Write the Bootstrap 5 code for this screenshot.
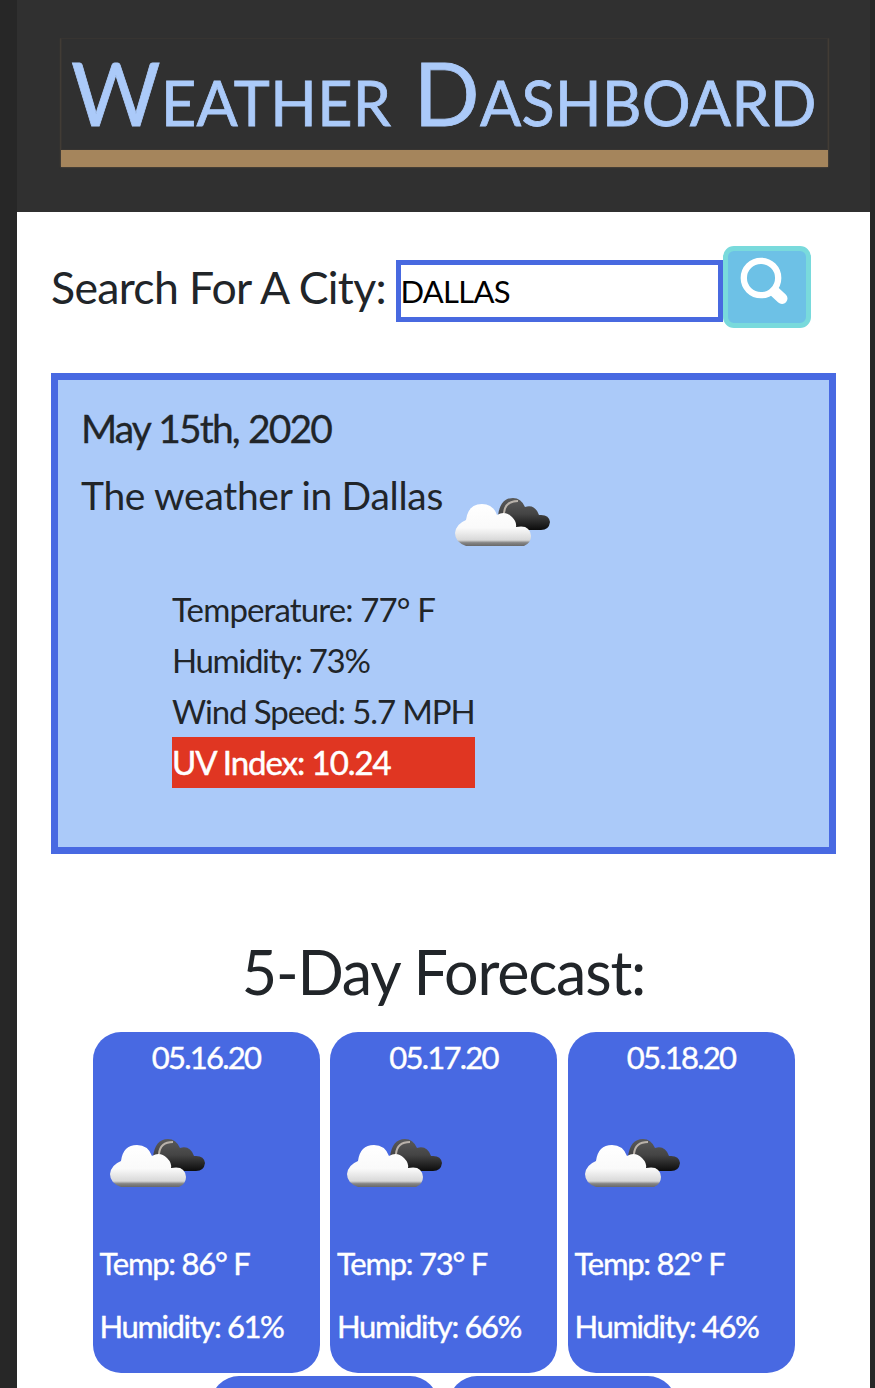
<!DOCTYPE html>
<html lang="en">
<head>
<meta charset="utf-8">
<meta name="viewport" content="width=device-width, initial-scale=1">
<title>Weather Dashboard</title>
<link href="https://cdn.jsdelivr.net/npm/bootstrap@5.3.0/dist/css/bootstrap.min.css" rel="stylesheet">
<style>
html,body{height:1388px;overflow:hidden}
body{background:#272727;font-family:Lato,sans-serif;color:#212529}
.page{width:853px;height:1388px;margin-left:17px}
.top{background:#303030;height:212px;padding:38px 42px 0 44px}
.brand{height:129px;border-bottom:17px solid #a5855c;box-shadow:inset 0 0 0 1px #373431,0 0 2px #6b5842;clip-path:inset(0 -2px -2px -2px);color:#abcaf9;font-size:86.5px;line-height:110px;font-variant:small-caps;padding-left:10px;-webkit-text-stroke:.8px #abcaf9;letter-spacing:.35px}
.search{height:161px;padding:34px 0 0 34px}
.search label{font-size:44.6px;line-height:60px;width:344.5px;margin-top:11px;letter-spacing:-.68px}
.city{width:327.5px;height:62px;margin-top:14px;border:5px solid #4869e0;padding:0;font-size:31px;color:#000;line-height:50px;outline:0;letter-spacing:-.7px}
.go{width:88px;height:82px;border:5px solid #79dadc;border-radius:11px;background:#6dc1e6;margin-left:-.5px}
.today{width:785px;height:481px;margin-left:34px;border:7px solid #4869e2;background:#abcaf9;padding:23px 0 0 23px}
.line1{font-size:39px;line-height:50px;height:67px;letter-spacing:-1.85px;-webkit-text-stroke:.3px;word-spacing:1px}
.line2{height:114px;font-size:39px;line-height:50px;letter-spacing:-.3px}
.stats{width:303px;margin-left:91px;font-size:33px;line-height:51px;letter-spacing:-.87px}
.t-hum{letter-spacing:-1.35px}
.t-wind{letter-spacing:-1.1px}
.uv{background:#e03622;color:#fff;letter-spacing:-1.05px;-webkit-text-stroke:.5px}
.ftitle{font-size:61px;line-height:80px;margin-top:78px;height:100px;letter-spacing:-1.2px}
.days{column-gap:10.5px;row-gap:3px}
.day{width:227px;height:341px;border-radius:28px;background:#4869e2;color:#fff;font-size:31px;padding:0 0 0 7px;line-height:50px;letter-spacing:-1.38px;-webkit-text-stroke:.4px}
.date{text-align:center;padding-right:7px;height:81px;letter-spacing:-1.75px}
.clouds{display:block;width:130px;height:80px;filter:blur(.5px)}
.line2 .clouds{margin:10px 0 0 -3px}
.day .clouds{margin:8px 0 0 -5px}
.temp{margin-top:37px;height:63px;letter-spacing:-1.25px}
</style>
</head>
<body>
<svg width="0" height="0" class="position-absolute">
 <defs>
  <linearGradient id="light" gradientUnits="userSpaceOnUse" x1="0" y1="24" x2="0" y2="67"><stop offset="0" stop-color="#fff"/><stop offset=".55" stop-color="#fafafa"/><stop offset=".84" stop-color="#d8d8d8"/><stop offset=".9" stop-color="#858585"/><stop offset="1" stop-color="#606060"/></linearGradient>
  <linearGradient id="dark" gradientUnits="userSpaceOnUse" x1="0" y1="18" x2="0" y2="50"><stop offset="0" stop-color="#5a5a5a"/><stop offset=".5" stop-color="#444"/><stop offset="1" stop-color="#0c0c0c"/></linearGradient>
  <symbol id="cloud" viewBox="0 0 130 80">
   <path d="M58 36Q60 18 73 18Q81 18 85 27Q95 24 99 35Q109 34 110 42Q109 50 101 50H78L60 41Z" fill="url(#dark)"/>
   <path d="M64 33Q65 21 78 21" fill="none" stroke="#b9b2aa" stroke-width="2"/>
   <path d="M26 66Q15 62 15 53Q16 44 26 40Q28 24 42 24Q53 24 57 35Q65 30 72 37Q77 42 76 47Q90 44 91 56Q91 63 84 66Z" fill="url(#light)"/>
  </symbol>
 </defs>
</svg>
<main class="page bg-white overflow-hidden">
 <header class="top"><h1 class="brand fw-normal m-0 text-nowrap">Weather Dashboard</h1></header>
 <form class="search d-flex align-items-start">
  <label for="city" class="text-nowrap flex-shrink-0">Search For A City:</label>
  <input id="city" class="city rounded-0" value="DALLAS">
  <button type="button" class="go p-0 d-block" aria-label="Search"><svg class="d-block" width="78" height="72" viewBox="0 0 78 72" fill="none" stroke="#fff"><circle cx="33" cy="27" r="17.2" stroke-width="6.3"/><path d="M47 41L54 47.5" stroke-width="11" stroke-linecap="round"/></svg></button>
 </form>
 <section class="today text-nowrap">
  <div class="line1">May 15th, 2020</div>
  <div class="line2 d-flex align-items-start"><span>The weather in Dallas</span><svg class="clouds"><use href="#cloud"/></svg></div>
  <div class="stats">
   <div>Temperature: 77° F</div>
   <div class="t-hum">Humidity: 73%</div>
   <div class="t-wind">Wind Speed: 5.7 MPH</div>
   <div class="uv">UV Index: 10.24</div>
  </div>
 </section>
 <h2 class="ftitle text-center fw-normal mb-0">5-Day Forecast:</h2>
 <section class="days d-flex flex-wrap justify-content-center text-nowrap">
  <article class="day"><div class="date">05.16.20</div><svg class="clouds"><use href="#cloud"/></svg><div class="temp">Temp: 86° F</div><div class="humid">Humidity: 61%</div></article>
  <article class="day"><div class="date">05.17.20</div><svg class="clouds"><use href="#cloud"/></svg><div class="temp">Temp: 73° F</div><div class="humid">Humidity: 66%</div></article>
  <article class="day"><div class="date">05.18.20</div><svg class="clouds"><use href="#cloud"/></svg><div class="temp">Temp: 82° F</div><div class="humid">Humidity: 46%</div></article>
  <article class="day"></article>
  <article class="day"></article>
 </section>
</main>
<script src="https://cdn.jsdelivr.net/npm/bootstrap@5.3.0/dist/js/bootstrap.bundle.min.js"></script>
</body>
</html>
